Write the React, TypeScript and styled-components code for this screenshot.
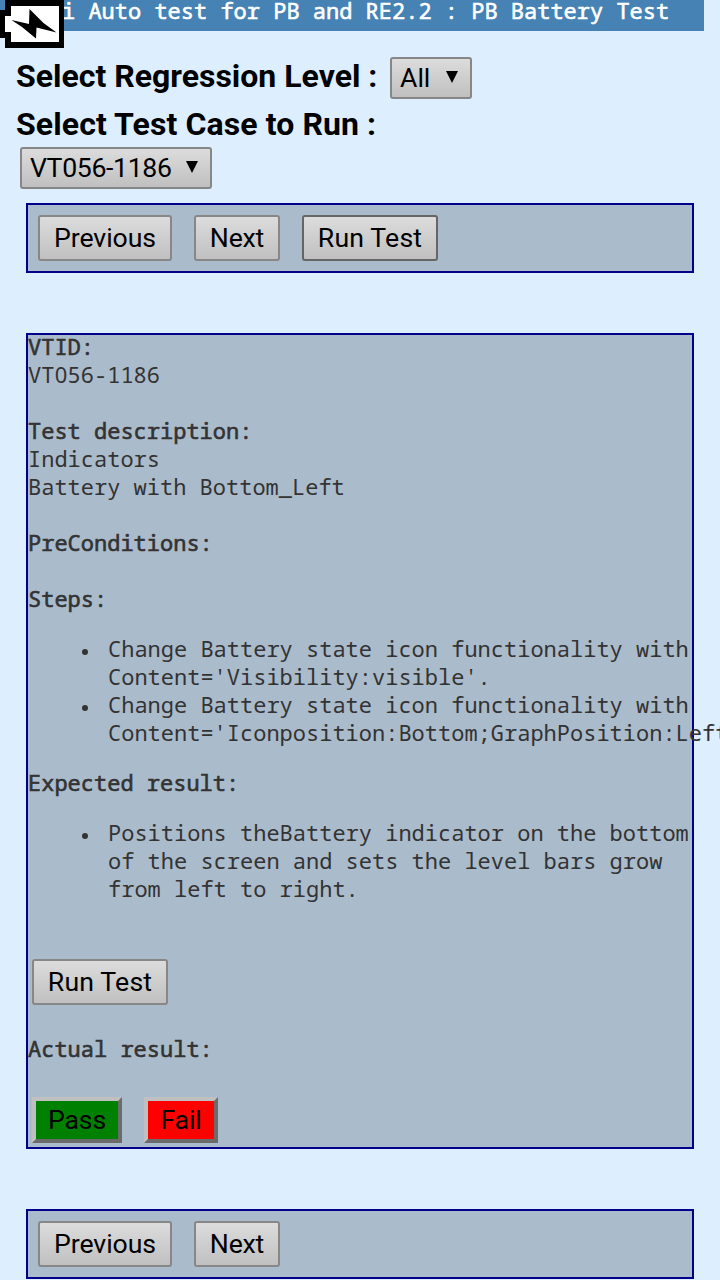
import React from "react";
import styled, { createGlobalStyle } from "styled-components";

const GlobalStyle = createGlobalStyle`
  * { box-sizing: border-box; }
  html, body { margin: 0; background: #ddeeff; }
  body { width: 720px; height: 1280px; overflow: hidden; }
`;

const mono = `"Noto Sans Mono", "DejaVu Sans Mono", monospace`;

const Page = styled.main`
  height: 1280px;
  overflow: hidden;
  background: #ddeeff;
  color: #000;
  font-family: Roboto, sans-serif;
`;

const TitleBar = styled.header`
  width: 704px;
  height: 31px;
  padding-left: 62px;
  background: #4682b4;
  color: #fff;
  font: 22px/20px ${mono};
  -webkit-text-stroke: 0.6px #fff;
  white-space: pre;
`;

const BatteryIcon = styled.svg`
  position: absolute;
  top: 0;
  left: 0;
  display: block;
`;

const Filters = styled.section`
  display: flex;
  flex-direction: column;
  align-items: flex-start;
  padding: 26px 0 0 16px;
`;

const FilterRow = styled.div`
  display: flex;
  height: 42px;
`;

const Label = styled.span<{ $spacing: number }>`
  font-size: 32px;
  font-weight: 700;
  line-height: 38px;
  letter-spacing: ${(p) => p.$spacing}px;
  white-space: nowrap;
`;

const LevelLabel = styled(Label)`
  width: 374px;
`;

const CaseLabel = styled(Label)`
  margin-top: 6px;
  height: 42px;
`;

const SelectBox = styled.button<{ $width: number; $spacing?: number }>`
  display: flex;
  align-items: center;
  justify-content: space-between;
  width: ${(p) => p.$width}px;
  height: 42px;
  padding: 0 12px 0 8px;
  border: 2px solid #878787;
  border-radius: 3px;
  background: linear-gradient(#dcdcdc, #c0c0c0);
  color: #000;
  font: 26.67px/38px Roboto, sans-serif;
  letter-spacing: ${(p) => p.$spacing ?? 0}px;
  white-space: nowrap;
`;

const CaseSelect = styled(SelectBox)`
  margin: 0 0 0 4px;
`;

const Arrow = styled.svg`
  display: block;
  margin-bottom: 2px;
`;

const Toolbar = styled.nav<{ $top: number }>`
  display: flex;
  gap: 22px;
  width: 668px;
  height: 70px;
  margin: ${(p) => p.$top}px 0 0 26px;
  padding: 10px;
  border: 2px solid #00008b;
  background: #aabbcc;
`;

const Button = styled.button<{ $width: number; $focused?: boolean; $spacing?: number }>`
  width: ${(p) => p.$width}px;
  height: 46px;
  padding: 0;
  border: 2px solid ${(p) => (p.$focused ? "#666" : "#878787")};
  border-radius: 3px;
  background: linear-gradient(#dcdcdc, #c0c0c0);
  color: #000;
  font: 26.67px/40px Roboto, sans-serif;
  letter-spacing: ${(p) => p.$spacing ?? -0.1}px;
  white-space: nowrap;
`;

const Panel = styled.section`
  width: 668px;
  height: 816px;
  margin: 60px 0 0 26px;
  border: 2px solid #00008b;
  background: #aabbcc;
  color: #333;
  font: 22px/28px ${mono};
`;

const Report = styled.div`
  margin-top: -3px;
`;

const Line = styled.div`
  height: 28px;
  white-space: pre;
`;

const Heading = styled(Line)`
  -webkit-text-stroke: 0.6px #333;
`;

/* Plain zero, without the slash of the monospace face. */
const Zero = styled.span`
  display: inline-block;
  width: 13.2px;
  font-family: "Noto Sans", sans-serif;
  line-height: 20px;
  text-align: center;
`;

const List = styled.ul`
  margin: 22px 0;
  padding: 0 0 0 80px;
  list-style: none;
`;

const Item = styled.li`
  display: flex;
  white-space: pre;

  &::before {
    content: "";
    flex: none;
    width: 6px;
    height: 6px;
    margin: 15px 20px 0 -26px;
    border-radius: 50%;
    background: #333;
  }
`;

const RunRow = styled.div`
  display: flex;
  height: 46px;
  margin: 57px 0 29px 4px;
`;

const Verdicts = styled.div`
  display: flex;
  gap: 22px;
  margin: 35px 0 0 4px;
`;

const Verdict = styled.button<{ $width: number; $color: string }>`
  width: ${(p) => p.$width}px;
  height: 46px;
  padding: 0;
  border: 4px solid;
  border-color: #c0c0c0 #6b6b6b #6b6b6b #c0c0c0;
  background: ${(p) => p.$color};
  color: #000;
  font: 26.67px/36px Roboto, sans-serif;
  letter-spacing: -0.2px;
`;

function DropArrow() {
  return (
    <Arrow width="12" height="12" viewBox="0 0 12 12">
      <path d="M0 0H12L6 12Z" fill="#000" />
    </Arrow>
  );
}

export default function App() {
  return (
    <Page>
      <GlobalStyle />
      <TitleBar>i Auto test for PB and RE2.2 : PB Battery Test</TitleBar>
      <BatteryIcon width="64" height="48" viewBox="0 0 64 48">
        <path d="M5 0H64V48H5V38H0V10H5Z" fill="#000" />
        <path d="M11 6H59V42H11V32H5V16H11Z" fill="#fff" />
        <path d="M11.5 20L29 24L29.5 9L43.5 23L56.5 32.5L36.5 27.5L36 38.5L22 27Z" fill="#000" />
      </BatteryIcon>

      <Filters>
        <FilterRow>
          <LevelLabel $spacing={0}>Select Regression Level :</LevelLabel>
          <SelectBox $width={82}>
            All
            <DropArrow />
          </SelectBox>
        </FilterRow>
        <CaseLabel $spacing={0.1}>Select Test Case to Run :</CaseLabel>
        <CaseSelect $width={192} $spacing={-0.36}>
          VT056-1186
          <DropArrow />
        </CaseSelect>
      </Filters>

      <Toolbar $top={14}>
        <Button $width={134}>Previous</Button>
        <Button $width={86} $spacing={-0.2}>Next</Button>
        <Button $width={136} $spacing={0.15} $focused>
          Run Test
        </Button>
      </Toolbar>

      <Panel>
        <Report>
          <Heading>VTID:</Heading>
          <Line>
            VT<Zero>0</Zero>56-1186
          </Line>
          <Line />
          <Heading>Test description:</Heading>
          <Line>Indicators</Line>
          <Line>Battery with Bottom_Left</Line>
          <Line />
          <Heading>PreConditions:</Heading>
          <Line />
          <Heading>Steps:</Heading>
          <List>
            <Item>{"Change Battery state icon functionality with\nContent='Visibility:visible'."}</Item>
            <Item>{"Change Battery state icon functionality with\nContent='Iconposition:Bottom;GraphPosition:Left'."}</Item>
          </List>
          <Heading>Expected result:</Heading>
          <List>
            <Item>{"Positions theBattery indicator on the bottom\nof the screen and sets the level bars grow\nfrom left to right."}</Item>
          </List>
          <RunRow>
            <Button $width={136} $spacing={0.15}>Run Test</Button>
          </RunRow>
          <Heading>Actual result:</Heading>
          <Verdicts>
            <Verdict $width={90} $color="#008000">Pass</Verdict>
            <Verdict $width={74} $color="#ff0000">Fail</Verdict>
          </Verdicts>
        </Report>
      </Panel>

      <Toolbar $top={60}>
        <Button $width={134}>Previous</Button>
        <Button $width={86} $spacing={-0.2}>Next</Button>
      </Toolbar>
    </Page>
  );
}
